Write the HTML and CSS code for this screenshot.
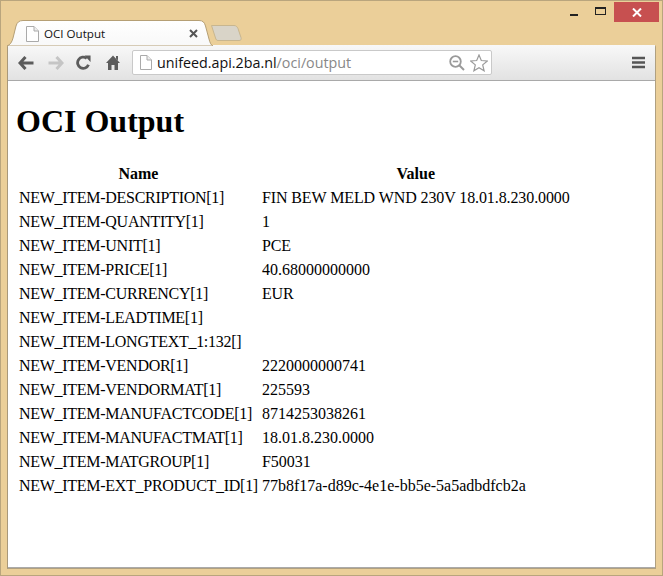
FILE: index.html
```html
<!DOCTYPE html>
<html lang="en">
<head>
<meta charset="utf-8">
<title>OCI Output</title>
<link rel="stylesheet" href="styles.css">
</head>
<body>
<div class="window">
  <div class="titlebar">
    <div class="tab">
      <svg class="tab-shape" width="207" height="26" viewBox="0 0 207 26"><defs><linearGradient id="tabfill" x1="0" y1="0" x2="0" y2="1"><stop offset="0" stop-color="#fff"/><stop offset="1" stop-color="#f8f8f8"/></linearGradient></defs><path d="M0 26 C3 25 5 22 6 18 L9 6 C10 2.500 12 .5 16 .5 L192 .5 C196 .5 197.500 2.500 198.500 6 L202 19 C203 23 204 25 206 26 Z" fill="url(#tabfill)" stroke="#b59f75"/></svg>
      <svg class="page-icon" width="13" height="16" viewBox="0 0 13 16"><path d="M.5 .5 H8 L12.500 5 V15.500 H.5 Z" fill="#fff" stroke="#aaa"/><path d="M8 .5 V5 H12.500" fill="#eee" stroke="#aaa"/></svg>
      <span class="tab-title">OCI Output</span>
      <svg class="tab-close" width="9" height="9" viewBox="0 0 9 9"><path d="M1 1 L8 8 M8 1 L1 8" stroke="#555" stroke-width="2"/></svg>
    </div>
    <svg class="new-tab" width="31" height="16" viewBox="0 0 31 16"><path d="M.5 .5 H23 C25 .5 26 1.500 27 3.500 L30 12.500 C30.500 14.500 30 15.500 28 15.500 H7 C5.500 15.500 5 14.500 4.500 13 Z" fill="#d9d4c8" stroke="#c8b68f"/></svg>
    <div class="win-controls">
      <span class="ctl"><span class="ctl-min"></span></span>
      <span class="ctl"><span class="ctl-max"></span></span>
      <span class="ctl-close"><svg width="10" height="9" viewBox="0 0 10 9"><path d="M1 .5 L9 8.500 M9 .5 L1 8.500" stroke="#fff" stroke-width="2"/></svg></span>
    </div>
  </div>
  <div class="browser">
    <div class="toolbar">
      <svg class="tool" width="16" height="14" viewBox="0 0 16 14"><path d="M7.500 1 L2 7 L7.500 13 M2.500 7 H15.500" fill="none" stroke="#5c5c5c" stroke-width="3"/></svg>
      <svg class="tool" width="16" height="14" viewBox="0 0 16 14"><path d="M8.500 1 L14 7 L8.500 13 M13.500 7 H.5" fill="none" stroke="#c5c5c5" stroke-width="3"/></svg>
      <svg class="tool reload" width="15" height="15" viewBox="0 0 16 16"><path d="M13.300 10.500 A6 6 0 1 1 11.500 3.600" fill="none" stroke="#5c5c5c" stroke-width="3"/><path d="M9 .5 L15.500 .5 V7.500 Z" fill="#5c5c5c"/></svg>
      <svg class="tool" width="14" height="15" viewBox="0 0 14 15"><path d="M7 .5 L14 8 H12 V15 H8.500 V10 H5.500 V15 H2 V8 H0 Z M10 1 H12 V5.500 L10 3.500 Z" fill="#5c5c5c"/></svg>
      <div class="omnibox">
        <svg class="omni-page" width="12" height="15" viewBox="0 0 12 15"><path d="M.5 .5 H7 L11.500 5 V14.500 H.5 Z" fill="#fff" stroke="#aaa"/><path d="M7 .5 V5 H11.500" fill="#eee" stroke="#aaa"/></svg>
        <span class="url"><span class="host">unifeed.api.2ba.nl</span>/oci/output</span>
        <svg class="zoom-icon" width="16" height="16" viewBox="0 0 16 16"><circle cx="6.500" cy="6.500" r="5.300" fill="none" stroke="#9a9a9a" stroke-width="1.800"/><path d="M3.800 6.500 H9.200" stroke="#9a9a9a" stroke-width="1.600"/><path d="M10.500 10.500 L15 15" stroke="#9a9a9a" stroke-width="2"/></svg>
        <svg class="star-icon" width="18" height="18" viewBox="0 0 18 18"><path d="M9 1 L11.300 6.500 L17.300 7 L12.700 10.900 L14.100 16.800 L9 13.700 L3.900 16.800 L5.300 10.900 L.7 7 L6.700 6.500 Z" fill="#fff" stroke="#9a9a9a" stroke-width="1.200"/></svg>
      </div>
      <svg class="menu-icon" width="13" height="13" viewBox="0 0 13 13"><path d="M0 2 H13 M0 6.500 H13 M0 11 H13" stroke="#555" stroke-width="2.500"/></svg>
    </div>
    <main class="content">
      <h1>OCI Output</h1>
      <table>
        <thead><tr><th>Name</th><th>Value</th></tr></thead>
        <tbody>
          <tr><td class="key">NEW_ITEM-DESCRIPTION[1]</td><td class="caps">FIN BEW MELD WND 230V 18.01.8.230.0000</td></tr>
          <tr><td class="key">NEW_ITEM-QUANTITY[1]</td><td>1</td></tr>
          <tr><td class="key">NEW_ITEM-UNIT[1]</td><td class="caps">PCE</td></tr>
          <tr><td class="key">NEW_ITEM-PRICE[1]</td><td>40.68000000000</td></tr>
          <tr><td class="key">NEW_ITEM-CURRENCY[1]</td><td class="caps">EUR</td></tr>
          <tr><td class="key">NEW_ITEM-LEADTIME[1]</td><td></td></tr>
          <tr><td class="key">NEW_ITEM-LONGTEXT_1:132[]</td><td></td></tr>
          <tr><td class="key">NEW_ITEM-VENDOR[1]</td><td>2220000000741</td></tr>
          <tr><td class="key">NEW_ITEM-VENDORMAT[1]</td><td>225593</td></tr>
          <tr><td class="key">NEW_ITEM-MANUFACTCODE[1]</td><td>8714253038261</td></tr>
          <tr><td class="key">NEW_ITEM-MANUFACTMAT[1]</td><td>18.01.8.230.0000</td></tr>
          <tr><td class="key">NEW_ITEM-MATGROUP[1]</td><td>F50031</td></tr>
          <tr><td class="key">NEW_ITEM-EXT_PRODUCT_ID[1]</td><td>77b8f17a-d89c-4e1e-bb5e-5a5adbdfcb2a</td></tr>
        </tbody>
      </table>
    </main>
  </div>
</div>
</body>
</html>
```
FILE: styles.css
```css
* { box-sizing: border-box; }
html, body { margin: 0; padding: 0; }
body { width: 663px; height: 576px; overflow: hidden; }
.window {
  width: 663px; height: 576px;
  background: #ebcf99;
  border: 1px solid #b9a57d;
  display: flex; flex-direction: column;
  padding: 0 6px 6px 6px;
}
.titlebar { height: 44px; flex: none; position: relative; display: flex; align-items: flex-end; }
.tab {
  width: 207px; height: 25px; position: relative; z-index: 1; flex: none;
  display: flex; align-items: center; padding: 0 0 0 19px; margin-bottom: -1px;
}
.tab-shape { position: absolute; left: 0; top: -1px; }
.page-icon, .tab-title, .tab-close { position: relative; flex: none; }
.tab-title { font: 11.600px "Open Sans", "Noto Sans", sans-serif; color: #111; margin-left: 5px; width: 145px; }
.new-tab { margin-left: -3px; margin-bottom: 4px; flex: none; }
.win-controls { position: absolute; right: -3px; top: 1px; display: flex; align-items: flex-start; }
.ctl { width: 27px; height: 20px; display: flex; align-items: center; justify-content: center; }
.ctl-min { width: 8px; height: 2px; background: #222; margin-top: 6px; }
.ctl-max { width: 11px; height: 8px; border: 1px solid #222; border-top-width: 2px; margin-top: -2px; }
.ctl-close { width: 45px; height: 20px; background: #c75050; display: flex; align-items: center; justify-content: center; }
.browser { flex: 1; display: flex; flex-direction: column; border: 1px solid #b0a080; border-top: 0; border-left-color: #a8987a; min-height: 0; border-radius: 2px 2px 0 0; }
.toolbar {
  height: 36px; flex: none;
  background: linear-gradient(#f8f8f8, #e2e2e2);
  border-bottom: 1px solid #a9a9a9;
  display: flex; align-items: center; padding: 0 10px 0 10px; gap: 13.500px;
}
.reload { margin-left: -1px; margin-right: 1px; }
.omnibox {
  width: 360px; height: 25px; flex: none;
  background: #fff; border: 1px solid #c9c9c9; border-radius: 2px;
  display: flex; align-items: center; padding: 0 3px 0 7px; margin-left: -1px; margin-right: 126px;
}
.url { font: 14.300px "Open Sans", "Noto Sans", sans-serif; color: #888; margin-left: 5px; flex: 1; white-space: nowrap; }
.host { color: #111; }
.zoom-icon { margin-right: 5px; }
.content { flex: 1; background: #fff; padding: 10px 8px; border-bottom: 1px solid #aaa; min-height: 0; }
h1 { font: bold 32px/37px "Liberation Serif", serif; margin: 12px 0 21px; color: #000; }
table { border-collapse: separate; border-spacing: 2px; font: 16px/20px "Liberation Serif", serif; color: #000; }
th { font-weight: bold; text-align: center; padding: 1px; }
td { padding: 1px; white-space: nowrap; }
.key { letter-spacing: -0.280px; }
.caps { letter-spacing: -0.100px; }
```
